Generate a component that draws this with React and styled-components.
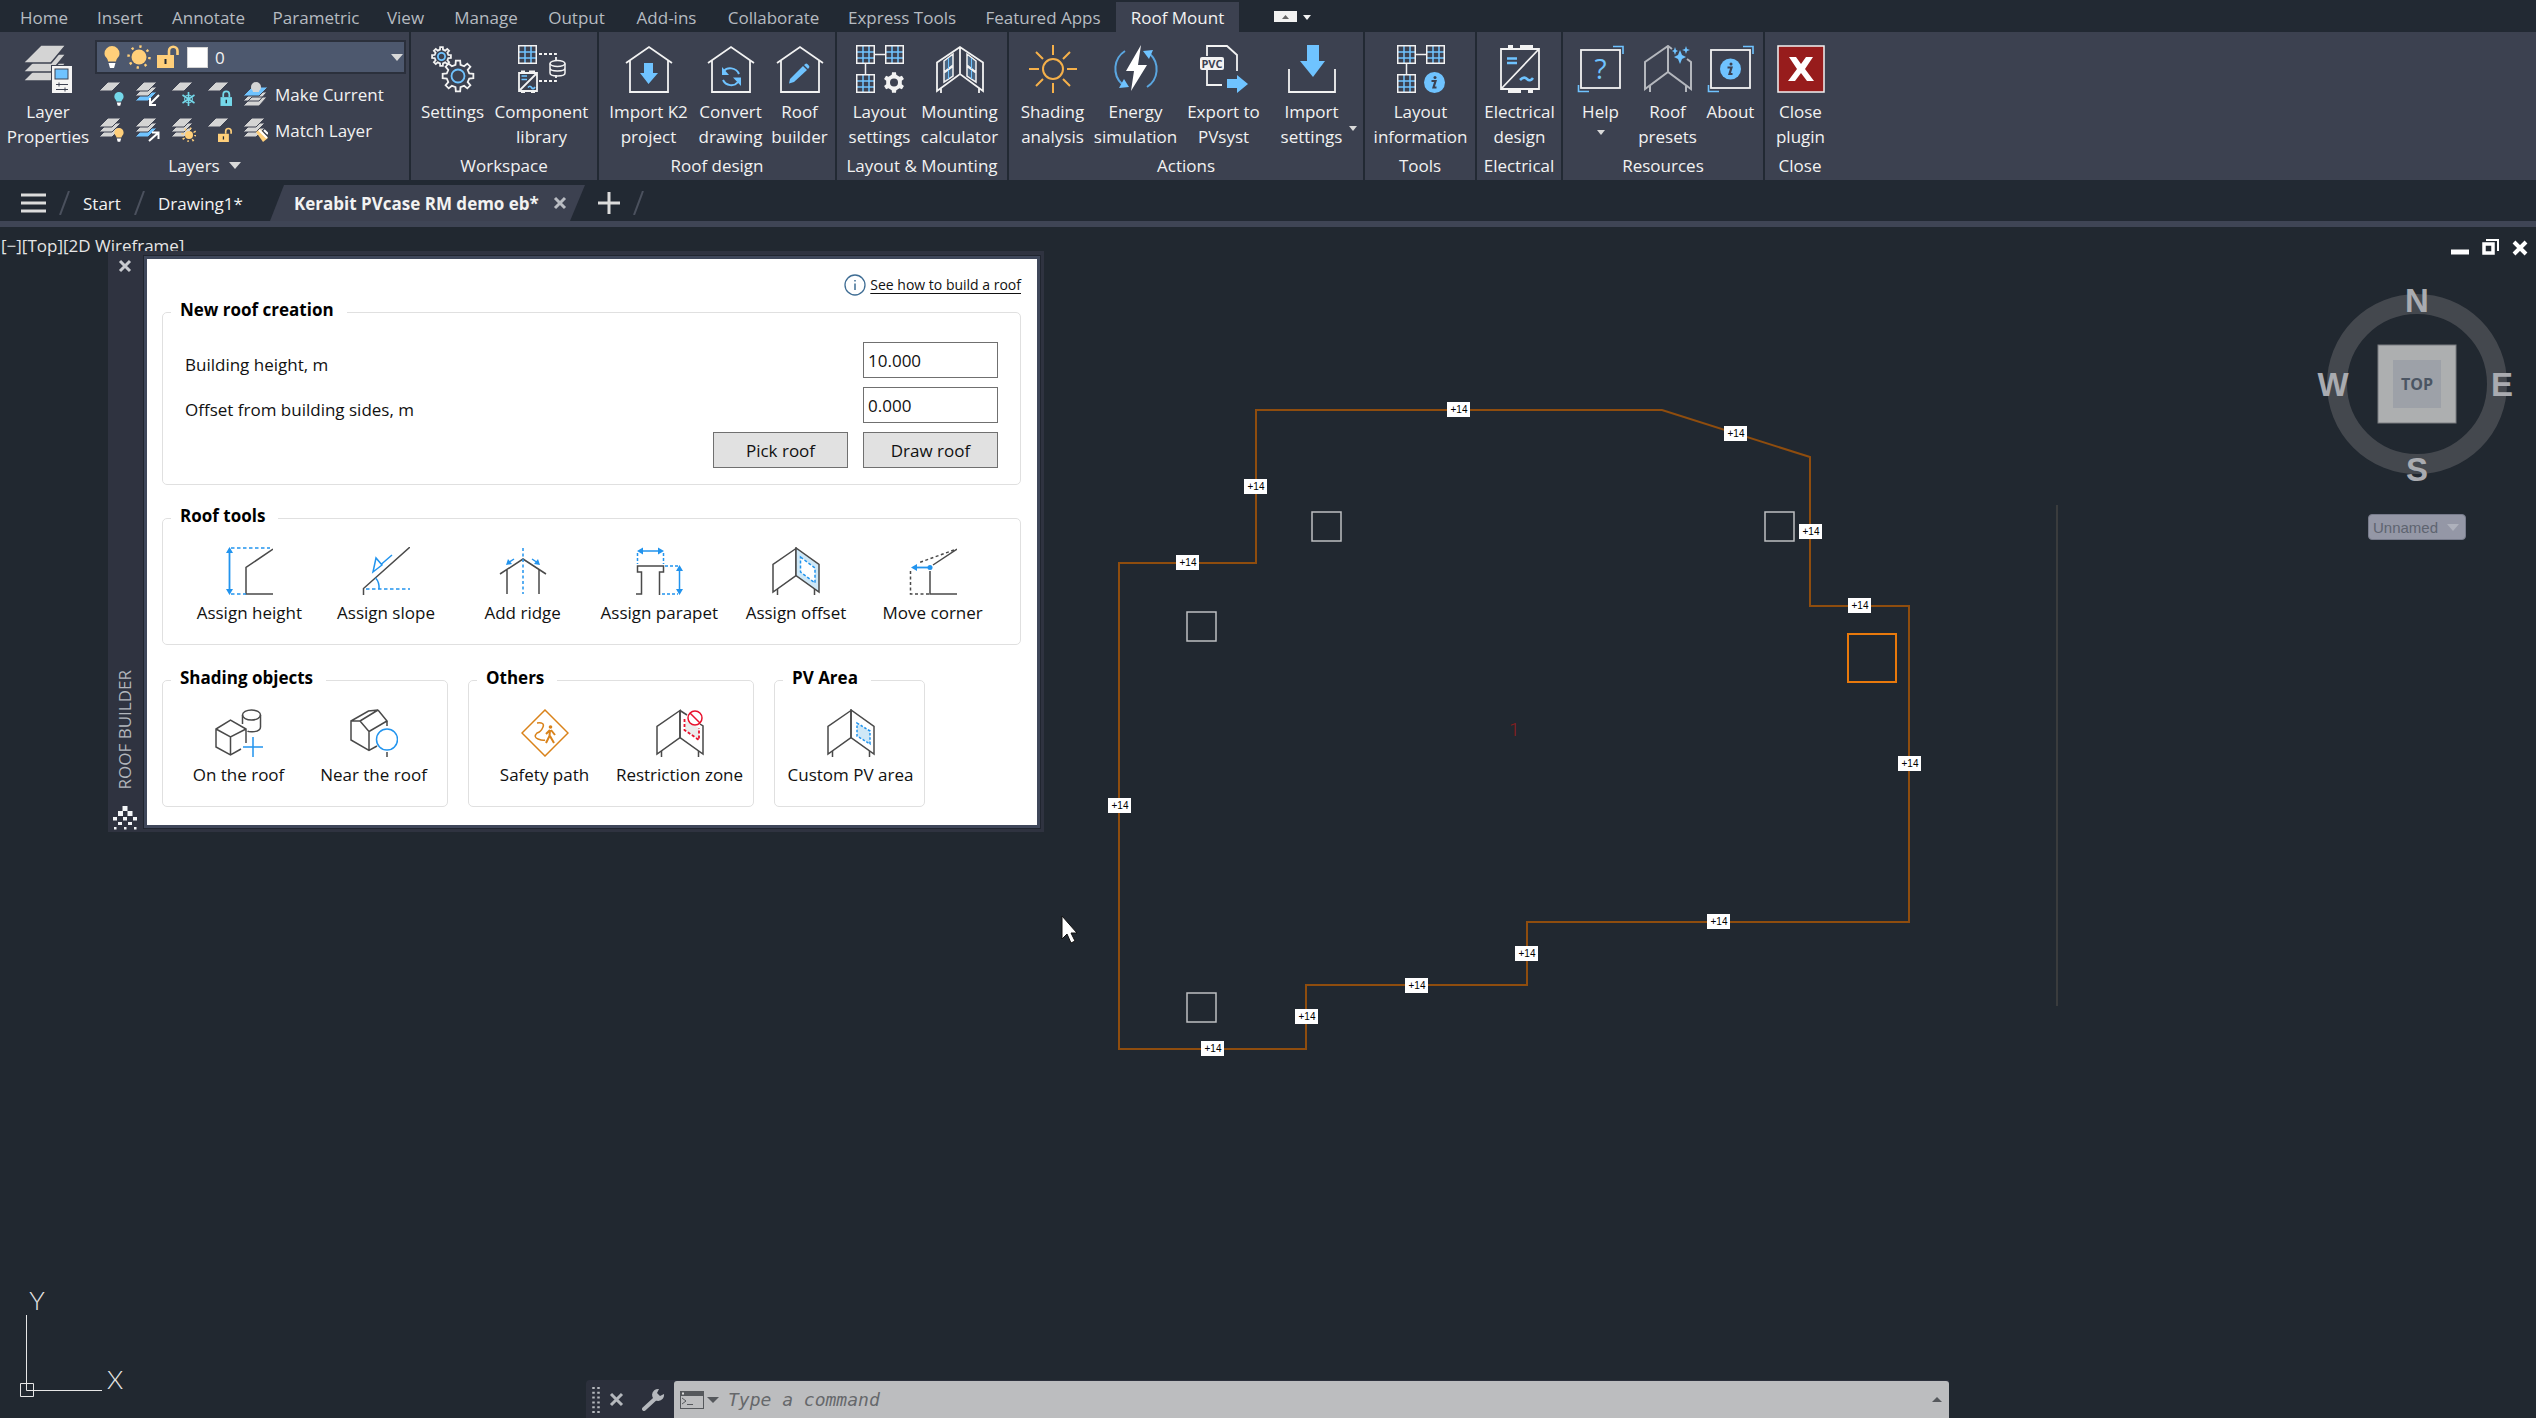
import { useState } from 'react';
import styled, { createGlobalStyle, css } from 'styled-components';

const colors = {
  canvas: '#212830',
  ribbon: '#3c4150',
  dark: '#222933',
  white: '#f2f2f2',
  blue: '#6fc3ff',
  yellow: '#ffcf7a',
  line: '#4a4a4a',
  azure: '#2294ee',
};

const GlobalStyle = createGlobalStyle`
  * {
    box-sizing: border-box;
  }

  body {
    margin: 0;
    background: ${colors.canvas};
    font-family: 'Open Sans', 'Noto Sans', sans-serif;
    font-size: 17px;
    overflow: hidden;
  }

  button, input, select {
    font: inherit;
    color: inherit;
    margin: 0;
  }
`;

const Page = styled.div`
  min-height: 100vh;
  display: flex;
  flex-direction: column;
`;

const plainButton = css`
  border: 0;
  padding: 0;
  background: none;
  cursor: pointer;
`;

/* menu tabs */

const MenuBar = styled.nav`
  height: 32px;
  padding: 2px 0 0 5px;
  display: flex;
  align-items: stretch;
  background: ${colors.dark};
`;

const MenuTab = styled.button`
  ${plainButton}
  width: ${({ $width }) => $width}px;
  white-space: nowrap;
  color: ${({ $active }) => ($active ? colors.white : '#b6bbc1')};
  background: ${({ $active }) => ($active ? colors.ribbon : 'transparent')};
`;

const RibbonToggle = styled.button`
  ${plainButton}
  margin-left: 35px;
  display: flex;
  align-items: center;
`;

/* ribbon */

const Ribbon = styled.div`
  height: 148px;
  display: flex;
  background: ${colors.ribbon};
  color: ${colors.white};
`;

const Panel = styled.section`
  width: ${({ $width }) => $width}px;
  padding: 0 0 2px;
  display: flex;
  flex-direction: column;
  justify-content: space-between;
  align-items: center;
  border-right: 2px solid ${({ $last }) => ($last ? 'transparent' : colors.dark)};
`;

const PanelTools = styled.div`
  padding: 13px 0 0 1px;
  display: flex;
  justify-content: center;
`;

const PanelTitle = styled.div`
  display: flex;
  align-items: center;
  gap: 9px;
  line-height: 25px;
  white-space: nowrap;
`;

const RibbonButton = styled.button`
  ${plainButton}
  position: relative;
  width: ${({ $width }) => $width}px;
  display: flex;
  flex-direction: column;
  align-items: center;
  gap: 6px;
  line-height: 25px;
  white-space: nowrap;
`;

const LabelLine = styled.span`
  display: block;
`;

const SideCaret = styled.span`
  position: absolute;
  right: 1px;
  top: 67px;
`;

const LayersBody = styled.div`
  align-self: stretch;
  display: flex;
  padding: 0 3px 0 0;
`;

const LayerControls = styled.div`
  flex: 1;
  padding-top: 8px;
`;

const LayerCombo = styled.label`
  height: 34px;
  margin-bottom: 2px;
  padding: 0 1px 0 7px;
  display: flex;
  align-items: center;
  gap: 7px;
  background: #4d586e;
  border: 2px solid #2b303c;
`;

const LayerSelect = styled.select`
  flex: 1;
  appearance: none;
  border: 0;
  background: transparent;
`;

const Swatch = styled.span`
  width: 21px;
  height: 21px;
  background: #fff;
  border: 1px solid #d4d4d4;
`;

const LayerRow = styled.div`
  height: 36px;
  padding-left: 5px;
  display: flex;
  align-items: center;
  gap: 12px;
`;

const LayerButton = styled.button`
  ${plainButton}
  display: flex;
  align-items: center;
  gap: 7px;
  white-space: nowrap;
`;

/* document tabs */

const DocBar = styled.div`
  height: 47px;
  padding: 5px 0 0 21px;
  display: flex;
  background: ${colors.dark};
  border-bottom: 6px solid #3f4555;
  color: ${colors.white};
`;

const DocTab = styled.button`
  ${plainButton}
  width: ${({ $width }) => $width}px;
  display: flex;
  align-items: center;
  white-space: nowrap;
`;

const ActiveDoc = styled.div`
  width: 315px;
  margin-left: 30px;
  padding: 0 18px 0 24px;
  display: flex;
  align-items: center;
  justify-content: space-between;
  font-weight: 700;
  white-space: nowrap;
  background: ${colors.ribbon};
  clip-path: polygon(14px 0, 100% 0, calc(100% - 15px) 100%, 0 100%);
`;

const IconButton = styled.button`
  ${plainButton}
  display: flex;
  align-items: center;
`;

const NewDrawing = styled(IconButton)`
  margin-left: 13px;
`;

const Slash = styled.span`
  width: 11px;
  margin: 6px ${({ $gap }) => $gap}px;
  display: flex;
`;

/* drawing area */

const Viewport = styled.main`
  position: relative;
  flex: 1;
  overflow: hidden;
  background: ${colors.canvas};
`;

const Drawing = styled.svg`
  position: absolute;
  inset: 0;
  width: 100%;
  height: 100%;
`;

const ViewLabel = styled.div`
  padding: 6px 0 0 1px;
  line-height: 25px;
  color: #e6e6e6;
`;

const WindowControls = styled.div`
  position: absolute;
  top: 12px;
  right: 8px;
  display: flex;
  gap: 13px;
`;

const ViewCube = styled.div`
  position: absolute;
  top: 47px;
  right: 9px;
  display: flex;
  flex-direction: column;
  align-items: center;
`;

const UcsButton = styled.button`
  width: 98px;
  height: 26px;
  margin-top: 20px;
  padding: 0 6px 0 4px;
  display: flex;
  align-items: center;
  justify-content: space-between;
  border: 1px solid #777b8b;
  border-radius: 4px;
  background: #9497a6;
  color: #5e6470;
  font: 15px 'Liberation Sans', sans-serif;
`;

const UcsIcon = styled.svg`
  position: absolute;
  left: 19px;
  bottom: 20px;
`;

const CommandBar = styled.form`
  position: absolute;
  left: 586px;
  right: 587px;
  bottom: 0;
  height: 38px;
  padding: 1px 0 0 6px;
  display: flex;
  align-items: stretch;
  background: #2c303c;
  border-radius: 4px 0 0 0;
`;

const CommandTools = styled.div`
  padding-left: 9px;
  display: flex;
  gap: 18px;
`;

const CommandField = styled.label`
  flex: 1;
  margin-left: 9px;
  padding: 0 7px 0 6px;
  display: flex;
  align-items: center;
  gap: 3px;
  background: #bcbdbf;
  border-radius: 3px 3px 0 0;
`;

const CommandInput = styled.input`
  flex: 1;
  margin-left: 4px;
  border: 0;
  outline: 0;
  background: transparent;
  font: italic 18px 'DejaVu Sans Mono', monospace;

  &::placeholder {
    color: #66686b;
    opacity: 1;
  }
`;

/* roof builder palette */

const Palette = styled.aside`
  position: absolute;
  top: 24px;
  left: 108px;
  width: 936px;
  padding: 8px 7px 7px 0;
  display: flex;
  background: #2f3340;
`;

const PaletteBar = styled.div`
  width: 33px;
  margin: 0 2px -5px 0;
  display: flex;
  flex-direction: column;
  align-items: center;
`;

const PaletteTitle = styled.h1`
  margin: auto 0 17px;
  writing-mode: vertical-rl;
  transform: rotate(180deg);
  font-size: 17px;
  line-height: 24px;
  font-weight: 400;
  color: #b3b7bd;
`;

const PaletteBody = styled.div`
  flex: 1;
  margin-left: 4px;
  padding: 12px 16px 18px 15px;
  background: #fff;
  color: #111;
  box-shadow: 0 0 0 3px #3f475a, 0 0 0 4px #20252f;
`;

const HelpRow = styled.div`
  height: 27px;
  display: flex;
  align-items: center;
  justify-content: flex-end;
  gap: 4px;
`;

const HelpLink = styled.a`
  font-size: 14px;
  color: #111;
  text-underline-offset: 3px;
`;

const Group = styled.fieldset`
  min-width: 0;
  margin: 0 0 ${({ $gap = 0 }) => $gap}px;
  padding: 15px 6px 19px 8px;
  border: 1px solid #e0e0e0;
  border-radius: 5px;
`;

const GroupTitle = styled.legend`
  height: 28px;
  padding: 0 13px 4px 9px;
  line-height: 24px;
  font-weight: 700;
  color: #000;
`;

const FormGrid = styled.div`
  padding: 1px 16px 0 14px;
  margin-bottom: -3px;
  display: grid;
  grid-template-columns: 1fr 135px 135px;
  grid-auto-rows: 36px;
  gap: 9px 15px;
`;

const FieldLabel = styled.label`
  grid-column: 1 / 3;
  padding-top: 10px;
  line-height: 26px;
`;

const TextInput = styled.input`
  min-width: 0;
  padding: 0 4px;
  border: 1px solid #707070;
  background: #fff;
`;

const FormButton = styled.button`
  grid-column: ${({ $column }) => $column};
  border: 1px solid #707070;
  padding: 0;
  background: #e1e1e1;
`;

const ToolGrid = styled.div`
  padding: ${({ $wide }) => ($wide ? '0 13px 0 10px' : '0')};
  display: grid;
  grid-template-columns: repeat(${({ $count }) => $count}, 1fr);
`;

const ToolButton = styled.button`
  ${plainButton}
  display: flex;
  flex-direction: column;
  align-items: center;
  gap: 6px;
  line-height: 24px;
  white-space: nowrap;
`;

const GroupRow = styled.div`
  display: grid;
  grid-template-columns: 286px 286px 151px;
  gap: 20px;
`;

/* icons */

const Svg = ({ size = 48, width = size, height = size, children, ...rest }) => (
  <svg width={width} height={height} viewBox={`0 0 ${width} ${height}`} fill="none" aria-hidden="true" {...rest}>
    {children}
  </svg>
);

const Caret = ({ width = 8, height = 5, color = '#d9d9d9' }) => (
  <Svg width={width} height={height}>
    <path d={`M0 0H${width}L${width / 2} ${height}Z`} fill={color} />
  </Svg>
);

const Cross = ({ size = 13, color = '#b9bcc2', stroke = 3 }) => (
  <Svg size={size}>
    <path d={`M2 2L${size - 2} ${size - 2}M${size - 2} 2L2 ${size - 2}`} stroke={color} strokeWidth={stroke} />
  </Svg>
);

const SlashMark = ({ gap }) => (
  <Slash $gap={gap}>
    <Svg width={11} height={24}>
      <path d="M10 0L1 24" stroke="#4b515e" strokeWidth="2" />
    </Svg>
  </Slash>
);

const gearPath = (cx, cy, outer, inner, teeth) => {
  const points = [];
  const step = (Math.PI * 2) / teeth;
  for (let i = 0; i < teeth; i += 1) {
    const mid = i * step - Math.PI / 2;
    [
      [-0.28, inner],
      [-0.18, outer],
      [0.18, outer],
      [0.28, inner],
    ].forEach(([k, r]) => {
      const a = mid + k * step;
      points.push(`${(cx + Math.cos(a) * r).toFixed(2)} ${(cy + Math.sin(a) * r).toFixed(2)}`);
    });
  }
  return `M${points.join('L')}Z`;
};

const SolarGrid = ({ x, y }) => (
  <g transform={`translate(${x} ${y})`}>
    <path d="M7 1V18M13 1V18M1 7H18M1 13H18" stroke={colors.blue} strokeWidth="1.5" />
    <rect x="0.75" y="0.75" width="17.5" height="17.5" stroke={colors.white} strokeWidth="1.5" />
  </g>
);

const LayerPropertiesIcon = () => (
  <Svg>
    {[18, 9, 0].map((y) => (
      <path key={y} d={`M17 ${y}H42L27 ${y + 18}H-1Z`} fill="#d4d4d4" stroke={colors.ribbon} strokeWidth="1.5" />
    ))}
    <rect x="27" y="20" width="22" height="29" fill={colors.ribbon} />
    <rect x="28" y="21" width="20" height="27" fill="#f4f4f4" />
    <rect x="31" y="24" width="13" height="10" fill={colors.blue} stroke="#3d4252" />
    <path d="M32 39.5H44M32 44.5H44M35 37.5V41.5M41 42.5V46.5" stroke="#3d4252" />
  </Svg>
);

const SettingsIcon = () => (
  <Svg stroke={colors.white} strokeWidth="1.8">
    <path d={gearPath(12.5, 11.5, 9.5, 7, 8)} />
    <circle cx="12.5" cy="11.5" r="3.6" stroke={colors.blue} />
    <path d={gearPath(29, 31, 15.5, 11.5, 8)} />
    <circle cx="29" cy="31" r="6.5" stroke={colors.blue} />
  </Svg>
);

const ComponentIcon = () => (
  <Svg>
    <SolarGrid x={0} y={0} />
    <path d="M1 28H19V46H1ZM1 46L19 28M3 26.5H7M11 26.5H17M3 47.5H7M13 47.5H17" stroke={colors.white} strokeWidth="1.8" />
    <path d="M3.5 31H9M3.5 34.5H9M10 42.5q2-2.5 3.5 0t3.5-.5" stroke={colors.blue} strokeWidth="1.7" />
    <path d="M21 9H38V16M21 36H38V30" stroke={colors.white} strokeWidth="1.8" strokeDasharray="3 2" />
    <ellipse cx="39.5" cy="18.5" rx="7.5" ry="3" stroke={colors.white} strokeWidth="1.5" />
    <path d="M32 18.5V28c0 4 15 4 15 0V18.5M32 23c0 4 15 4 15 0" stroke={colors.white} strokeWidth="1.5" />
  </Svg>
);

const House = ({ children }) => (
  <Svg>
    <path d="M1 18L24 2L47 18M5 15.5V47H43V15.5" stroke={colors.white} strokeWidth="1.8" />
    {children}
  </Svg>
);

const ImportHouseIcon = () => (
  <House>
    <path d="M19 18H28V28H33L23.5 39L15 28H19Z" fill={colors.blue} />
  </House>
);

const ConvertIcon = () => (
  <House>
    <path d="M17 26c3-4 12-4 15 3M31 37c-4 5-12 4-15-2" stroke={colors.blue} strokeWidth="2" />
    <path d="M15 22V30H22ZM34 41V32.5H26Z" fill={colors.blue} />
  </House>
);

const PencilHouseIcon = () => (
  <House>
    <path d="M14 34L27 21L31 25L18 37L13 38.5Z" fill={colors.blue} />
    <path d="M28 20L30 18.5q2 0 3.5 3.5L32 24Z" fill={colors.blue} />
  </House>
);

const LayoutGrid = ({ children }) => (
  <Svg>
    <SolarGrid x={0} y={0} />
    <SolarGrid x={29} y={0} />
    <SolarGrid x={0} y={29} />
    <path d="M19 9.5H29M9.5 19V29" stroke={colors.white} strokeWidth="1.5" />
    {children}
  </Svg>
);

const LayoutSettingsIcon = () => (
  <LayoutGrid>
    <path d={gearPath(38, 37.5, 10.5, 8, 6)} fill={colors.white} />
    <circle cx="38" cy="37.5" r="4" fill={colors.ribbon} />
  </LayoutGrid>
);

const InfoDot = ({ cx, cy, r }) => (
  <>
    <circle cx={cx} cy={cy} r={r} fill={colors.blue} />
    <path d={`M${cx - 3} ${cy - 1.5}H${cx + 1}L${cx - 1} ${cy + 5}H${cx + 2}`} stroke={colors.ribbon} strokeWidth="2.2" />
    <circle cx={cx + 0.5} cy={cy - 5} r="1.5" fill={colors.ribbon} />
  </>
);

const LayoutInfoIcon = () => (
  <LayoutGrid>
    <InfoDot cx={37.5} cy={37.5} r={10.5} />
  </LayoutGrid>
);

const MountingIcon = () => (
  <Svg stroke={colors.white} strokeWidth="1.8">
    <path d="M24 2L1 17.5V46L24 29L47 46V17.5ZM24 2V29M5 43V48M43 43V48" />
    <path
      d="M8 16L17 9V20L8 27ZM8 28L17 21.5V31L8 37ZM31 9L40 16V27L31 20ZM31 21.5L40 28V37L31 31Z"
      fill="#4b6580"
      strokeWidth="1.5"
    />
    <path d="M12.5 13V24M12.5 25V34M35.5 13V24M35.5 25V34" stroke={colors.blue} strokeWidth="1" />
  </Svg>
);

const SunIcon = () => (
  <Svg stroke="#f5b04a" strokeWidth="2">
    <circle cx="24" cy="24" r="10" />
    <path d="M24 0V10M24 38V48M0 24H10M38 24H48M7 7L14 14M34 34L41 41M41 7L34 14M14 34L7 41" />
  </Svg>
);

const EnergyIcon = () => (
  <Svg>
    <path d="M13 6A21 21 0 0 0 10 39M35 42A21 21 0 0 0 38 9" stroke="#5aa6e0" strokeWidth="2" />
    <path d="M17 42L7 43L12 34ZM31 6L41 5L37 14Z" fill={colors.blue} />
    <path d="M29 0L14 26H22L19 46L35 20H26Z" fill="#fff" />
  </Svg>
);

const ExportIcon = () => (
  <Svg>
    <path d="M7 11V1H27L37 10V26M7 25V40H22" stroke={colors.white} strokeWidth="1.8" />
    <rect x="0" y="12" width="24" height="13" rx="2" fill={colors.white} />
    <text x="12" y="22.5" textAnchor="middle" fontSize="11" fontWeight="700" fill={colors.ribbon}>
      PVC
    </text>
    <path d="M27 34H37V30L48 39L37 48V43H27Z" fill={colors.blue} />
  </Svg>
);

const ImportSettingsIcon = () => (
  <Svg>
    <path d="M1 24V47H47V24" stroke={colors.white} strokeWidth="1.8" />
    <path d="M19 0H31V16H37L25 32L12 16H19Z" fill={colors.blue} />
  </Svg>
);

const ElectricalIcon = () => (
  <Svg stroke={colors.white}>
    <path d="M5 4H43V44H5ZM5 44L43 4" strokeWidth="1.8" />
    <path d="M12 1.5H17M24 1.5H37M12 46.5H25M32 46.5H37" strokeWidth="3" />
    <path d="M11 13.5H21M11 18H21" stroke={colors.blue} strokeWidth="2.6" />
    <path d="M24 35q4-4 7-1t6-1" stroke={colors.blue} strokeWidth="2.6" />
  </Svg>
);

const Frame = ({ children }) => (
  <Svg>
    <rect x="4" y="5" width="39" height="38" stroke={colors.white} strokeWidth="1.8" />
    <path d="M36 1.5H46V9M1.5 40V46.5H12" stroke={colors.blue} strokeWidth="1.6" />
    {children}
  </Svg>
);

const HelpIcon = () => (
  <Frame>
    <text x="23.5" y="34" textAnchor="middle" fontSize="28" fill={colors.blue}>
      ?
    </text>
  </Frame>
);

const AboutIcon = () => (
  <Frame>
    <InfoDot cx={23.5} cy={24} r={10.5} />
  </Frame>
);

const PresetsIcon = () => (
  <Svg stroke="#b4b7bd" strokeWidth="2">
    <path d="M28 4L24 1L1 17V44L24 27L47 44V17L43 14M24 1V27M6 41V47M42 41V47" />
    <path
      d="M36 5l2 5 4 2-4 2-2 5-2-5-4-2 4-2ZM42 1l1 3 3 1-3 1-1 3-1-3-3-1 3-1ZM31 2l1 3 2 1-2 1-1 3-1-3-2-1 2-1Z"
      fill={colors.blue}
      stroke="none"
    />
  </Svg>
);

const CloseIcon = () => (
  <Svg>
    <rect x="1" y="1" width="46" height="46" fill="#971c1c" stroke={colors.white} strokeWidth="1.5" />
    <path d="M12 12H19L24 19L29 12H36L28 24L37 36H30L24 28L18 36H11L20 24Z" fill="#fff" />
  </Svg>
);

const BulbIcon = ({ x = 0, y = 0, scale = 1, color = colors.yellow }) => (
  <g transform={`translate(${x} ${y}) scale(${scale})`}>
    <path d="M8 0a7.5 7.5 0 0 1 7.5 7.5c0 4-3 4-3.5 8H4c0-4-3.5-4-3.5-8A7.5 7.5 0 0 1 8 0Z" fill={color} />
    <path d="M4.5 17H11.5L10 22H6Z" fill="#fff" />
  </g>
);

const SmallSun = ({ cx, cy, r, ray }) => (
  <>
    <circle cx={cx} cy={cy} r={r} fill={colors.yellow} />
    <circle
      cx={cx}
      cy={cy}
      r={ray}
      stroke={colors.yellow}
      strokeWidth="2.5"
      strokeDasharray={`${ray * 0.22} ${ray * 0.5654}`}
    />
  </>
);

const LockIcon = ({ x = 0, y = 0, scale = 1, color = colors.yellow, open }) => (
  <g transform={`translate(${x} ${y}) scale(${scale})`}>
    <rect x="0" y="9" width="17" height="13" fill={color} />
    <path d={open ? 'M12 9V5a4 4 0 0 1 8.5 0V9' : 'M4 9V5a4.5 4.5 0 0 1 9 0V9'} stroke={color} strokeWidth="2.6" />
    <path d="M8.5 13V18" stroke={colors.dark} strokeWidth="2" />
  </g>
);

const SmallLayer = ({ stack, accent, children }) => (
  <Svg size={24}>
    {(stack ? [10, 5, 0] : [0]).map((y) => (
      <path
        key={y}
        d={`M8 ${y}H21L12 ${y + 9}H-1Z`}
        fill={accent === y ? colors.blue : '#d4d4d4'}
        stroke={colors.ribbon}
      />
    ))}
    {children}
  </Svg>
);

const rowOneIcons = [
  { name: 'Layer off', icon: <SmallLayer><BulbIcon x={14} y={10} scale={0.62} color="#74d8ea" /></SmallLayer> },
  { name: 'Isolate', icon: <SmallLayer stack accent={10}><path d="M23 13L14 22M14 16V23H20" stroke="#fff" strokeWidth="2" /></SmallLayer> },
  {
    name: 'Freeze',
    icon: (
      <SmallLayer>
        <path d="M16.5 10V24M10.5 13L22.5 21M22.5 13L10.5 21" stroke="#74d8ea" strokeWidth="1.6" />
        <circle cx="16.5" cy="17" r="4" stroke="#74d8ea" />
      </SmallLayer>
    ),
  },
  { name: 'Lock', icon: <SmallLayer><LockIcon x={12.5} y={9} scale={0.68} color="#74d8ea" /></SmallLayer> },
];

const rowTwoIcons = [
  { name: 'Turn all layers on', icon: <SmallLayer stack><BulbIcon x={14} y={10} scale={0.62} /></SmallLayer> },
  { name: 'Unisolate', icon: <SmallLayer stack accent={10}><path d="M13 23L22 15M16 14.5H22.5V21" stroke="#fff" strokeWidth="2" /></SmallLayer> },
  { name: 'Thaw all layers', icon: <SmallLayer stack><SmallSun cx={17} cy={17} r={4} ray={6.5} /></SmallLayer> },
  { name: 'Unlock', icon: <SmallLayer><LockIcon x={10} y={10} scale={0.64} open /></SmallLayer> },
];

const MakeCurrentIcon = () => (
  <Svg size={24}>
    <path d="M8 15H23L15 24H-1ZM8 10H23L15 19H-1Z" fill="#d4d4d4" stroke={colors.ribbon} />
    <path d="M8 5H24L15 14H-1Z" fill={colors.blue} stroke={colors.ribbon} />
    <path d="M7 5a5 5 0 0 1 10 0c0 3-2 3-2 5H9c0-2-2-2-2-5Z" fill="#d4d4d4" />
  </Svg>
);

const MatchLayerIcon = () => (
  <SmallLayer stack>
    <path d="M12 14L16 11L24 20L19 24Z" fill={colors.yellow} />
    <path d="M15 12L23 20M20 12L24 16" stroke="#fff" strokeWidth="2" />
  </SmallLayer>
);

const AssignHeightIcon = () => (
  <Svg stroke={colors.line} strokeWidth="1.5">
    <path d="M48 2L21 20.5V47H48" />
    <path d="M4.5 3V45" stroke={colors.azure} strokeWidth="1.8" />
    <path d="M6 1H45M6 47H21" stroke={colors.azure} strokeDasharray="3.5 2.5" />
    <path d="M4.5 0L8 6H1ZM4.5 48L8 42H1Z" fill={colors.azure} stroke="none" />
  </Svg>
);

const AssignSlopeIcon = () => (
  <Svg stroke={colors.line} strokeWidth="1.5">
    <path d="M48 0L1.5 41.5V48" />
    <path d="M4 42H48" stroke={colors.azure} strokeDasharray="3.5 2.5" />
    <path d="M13.5 31q4 4 3.5 11M30 8L19 17.5M14 11L11 25L20 18Z" stroke={colors.azure} />
  </Svg>
);

const AddRidgeIcon = () => (
  <Svg stroke={colors.line} strokeWidth="1.5">
    <path d="M1 27L24 12L47 27M8 23V47M40 23V47" />
    <path d="M24 1V47" stroke={colors.azure} strokeDasharray="3 2.5" />
    <path d="M15 12L9 16M33 12L39 16" stroke={colors.azure} />
    <path d="M7 18L9 12L13 17ZM41 18L39 12L35 17Z" fill={colors.azure} stroke="none" />
  </Svg>
);

const AssignParapetIcon = () => (
  <Svg stroke={colors.line} strokeWidth="1.5">
    <path d="M24.5 48V25H28.5V19H2.5V25H6.5V47H1" />
    <path d="M5 4H26M44.5 22V44" stroke={colors.azure} />
    <path d="M2.5 6V17M28.5 6V17M30 19H43M27 47H43" stroke={colors.azure} strokeDasharray="3 2" />
    <path d="M2 4L8 0.5V7.5ZM29 4L23 0.5V7.5ZM44.5 18L48 24H41ZM44.5 48L48 42H41Z" fill={colors.azure} stroke="none" />
  </Svg>
);

const Book = ({ fill = 'none', right = 'M24 1V28.5L47 45V17.5Z', children }) => (
  <Svg stroke={colors.line} strokeWidth="1.5">
    <path d="M24 1.5L1 17.5V45L24 28.5Z" />
    <path d={right} fill={fill} />
    <path d="M5.5 42V48M42.5 42V48" />
    {children}
  </Svg>
);

const AssignOffsetIcon = () => (
  <Book fill="#cfe8f7">
    <path d="M28.5 10L43 21V36L28.5 25Z" fill="#fff" stroke={colors.azure} strokeDasharray="3 2" />
  </Book>
);

const MoveCornerIcon = () => (
  <Svg stroke={colors.line} strokeWidth="1.5">
    <path d="M48 2L24 18M21 24V47H48" />
    <path d="M45 3L9 16M1.5 24V47H20" strokeDasharray="3 2.5" />
    <path d="M6 20.5H20" stroke={colors.azure} strokeWidth="1.8" />
    <path d="M2 20.5L8 17V24Z" fill={colors.azure} stroke="none" />
    <circle cx="21" cy="20.5" r="2.5" fill={colors.azure} stroke="none" />
  </Svg>
);

const OnRoofIcon = () => (
  <Svg stroke={colors.line} strokeWidth="1.5">
    <path d="M26 40L15.5 46L1 38V20L15.5 11L31 20V34M1 20L15.5 28L31 20M15.5 28V46" />
    <ellipse cx="36.5" cy="6" rx="9" ry="5" />
    <path d="M27.5 6V15M45.5 6V18c0 6-12 5-13 4" />
    <path d="M38 28V48M28 38H48" stroke={colors.azure} />
  </Svg>
);

const NearRoofIcon = () => (
  <Svg stroke={colors.line} strokeWidth="1.5">
    <path d="M27 37L19 41.5L1 31V12L10 12L19 22.5V41.5M1 12L18.5 2L28 1L10 12M28 1L37 12L19 22.5M37 12V17M37 43V48" />
    <circle cx="37" cy="30.5" r="10.5" stroke={colors.azure} />
  </Svg>
);

const SafetyPathIcon = () => (
  <Svg stroke="#d9821a" strokeWidth="1.5">
    <path d="M24 1L47 24L24 47L1 24Z" />
    <path d="M16 14q8-1 6 4t-6 6q-4 4 1 6t7 1" />
    <circle cx="29.5" cy="18" r="1.8" fill="#d9821a" stroke="none" />
    <path d="M29 21L28.5 27L25 34M29 27L33 34M29 21L25 25M30 21L34 26" strokeWidth="2" />
  </Svg>
);

const RestrictionIcon = () => (
  <Book right="M24 1.5L31 6M24 1.5V28.5L47 45V17L44 15">
    <path d="M29 11L43 19V31L29 22Z" fill="#ececec" stroke="none" />
    <path d="M28.5 10V21L43 31V19" stroke="#e8112d" strokeWidth="1.8" strokeDasharray="3 2" />
    <circle cx="39" cy="9" r="7" stroke="#e8112d" fill="#fff" />
    <path d="M34 4L44 14" stroke="#e8112d" />
  </Book>
);

const PvAreaIcon = () => (
  <Book>
    <path d="M30 14L43 22V35L30 27Z" fill="#cfe8f7" stroke={colors.azure} strokeDasharray="2.5 1.8" />
  </Book>
);

const BrandIcon = () => (
  <Svg size={24}>
    <path
      d="M9.5 0h5v5h-5ZM5 5h5v5H5ZM14.5 5h5v5h-5ZM0 11h4v3.5H0ZM10 11h4v3.5h-4ZM20 11h4v3.5h-4ZM5 16h4v3H5ZM15 16h4v3h-4ZM1 21h2.5v2.5H1ZM11 21h2.5v2.5H11ZM21 21h2.5v2.5H21Z"
      fill="#f4f6f8"
    />
  </Svg>
);

/* data */

const menuTabs = [
  ['Home', 78],
  ['Insert', 74],
  ['Annotate', 103],
  ['Parametric', 112],
  ['View', 67],
  ['Manage', 94],
  ['Output', 87],
  ['Add-ins', 93],
  ['Collaborate', 121],
  ['Express Tools', 136],
  ['Featured Apps', 146],
  ['Roof Mount', 123],
];

const ribbonPanels = [
  {
    title: 'Workspace',
    width: 188,
    tools: [
      { label: ['Settings'], width: 74, icon: <SettingsIcon /> },
      { label: ['Component', 'library'], width: 104, icon: <ComponentIcon /> },
    ],
  },
  {
    title: 'Roof design',
    width: 238,
    tools: [
      { label: ['Import K2', 'project'], width: 86, icon: <ImportHouseIcon /> },
      { label: ['Convert', 'drawing'], width: 78, icon: <ConvertIcon /> },
      { label: ['Roof', 'builder'], width: 60, icon: <PencilHouseIcon /> },
    ],
  },
  {
    title: 'Layout & Mounting',
    width: 172,
    tools: [
      { label: ['Layout', 'settings'], width: 74, icon: <LayoutSettingsIcon /> },
      { label: ['Mounting', 'calculator'], width: 86, icon: <MountingIcon /> },
    ],
  },
  {
    title: 'Actions',
    width: 356,
    tools: [
      { label: ['Shading', 'analysis'], width: 74, icon: <SunIcon /> },
      { label: ['Energy', 'simulation'], width: 92, icon: <EnergyIcon /> },
      { label: ['Export to', 'PVsyst'], width: 84, icon: <ExportIcon /> },
      { label: ['Import', 'settings'], width: 92, icon: <ImportSettingsIcon />, sideCaret: true },
    ],
  },
  {
    title: 'Tools',
    width: 112,
    tools: [{ label: ['Layout', 'information'], width: 106, icon: <LayoutInfoIcon /> }],
  },
  {
    title: 'Electrical',
    width: 86,
    tools: [{ label: ['Electrical', 'design'], width: 80, icon: <ElectricalIcon /> }],
  },
  {
    title: 'Resources',
    width: 202,
    tools: [
      { label: ['Help'], width: 68, icon: <HelpIcon />, caret: true },
      { label: ['Roof', 'presets'], width: 66, icon: <PresetsIcon /> },
      { label: ['About'], width: 60, icon: <AboutIcon /> },
    ],
  },
  {
    title: 'Close',
    width: 72,
    tools: [{ label: ['Close', 'plugin'], width: 66, icon: <CloseIcon /> }],
  },
];

const roofTools = [
  { label: 'Assign height', icon: <AssignHeightIcon /> },
  { label: 'Assign slope', icon: <AssignSlopeIcon /> },
  { label: 'Add ridge', icon: <AddRidgeIcon /> },
  { label: 'Assign parapet', icon: <AssignParapetIcon /> },
  { label: 'Assign offset', icon: <AssignOffsetIcon /> },
  { label: 'Move corner', icon: <MoveCornerIcon /> },
];

const smallGroups = [
  {
    title: 'Shading objects',
    tools: [
      { label: 'On the roof', icon: <OnRoofIcon /> },
      { label: 'Near the roof', icon: <NearRoofIcon /> },
    ],
  },
  {
    title: 'Others',
    tools: [
      { label: 'Safety path', icon: <SafetyPathIcon /> },
      { label: 'Restriction zone', icon: <RestrictionIcon /> },
    ],
  },
  { title: 'PV Area', tools: [{ label: 'Custom PV area', icon: <PvAreaIcon /> }] },
];

const heightTags = [
  [1459, 410], [1736, 434], [1256, 487], [1188, 563], [1811, 532], [1860, 606], [1910, 764],
  [1719, 922], [1527, 954], [1417, 986], [1307, 1017], [1213, 1049], [1120, 806],
];

const shadingBoxes = [[1312, 512], [1765, 512], [1187, 612], [1187, 993]];

/* parts */

const MenuTabs = () => {
  const [active, setActive] = useState('Roof Mount');

  return (
    <MenuBar>
      {menuTabs.map(([name, width]) => (
        <MenuTab key={name} $width={width} $active={name === active} onClick={() => setActive(name)}>
          {name}
        </MenuTab>
      ))}
      <RibbonToggle aria-label="Minimize ribbon">
        <Svg width={38} height={12}>
          <rect width="23" height="11" fill="#f2f2f2" />
          <path d="M8 8H15L11.5 4Z" fill="#666" />
          <path d="M29 4H37L33 9Z" fill="#f2f2f2" />
        </Svg>
      </RibbonToggle>
    </MenuBar>
  );
};

const LayersPanel = () => (
  <Panel $width={411}>
    <LayersBody>
      <PanelTools>
        <RibbonButton $width={94}>
          <LayerPropertiesIcon />
          <span>
            <LabelLine>Layer</LabelLine>
            <LabelLine>Properties</LabelLine>
          </span>
        </RibbonButton>
      </PanelTools>
      <LayerControls>
        <LayerCombo>
          <Svg width={76} height={24}>
            <BulbIcon x={0} y={1} />
            <SmallSun cx={35} cy={12} r={7.5} ray={10.5} />
            <LockIcon x={53} y={1} open />
          </Svg>
          <Swatch />
          <LayerSelect aria-label="Current layer" defaultValue="0">
            <option value="0">0</option>
          </LayerSelect>
          <Caret width={12} height={7} />
        </LayerCombo>
        <LayerRow>
          {rowOneIcons.map(({ name, icon }) => (
            <IconButton key={name} aria-label={name}>{icon}</IconButton>
          ))}
          <LayerButton><MakeCurrentIcon />Make Current</LayerButton>
        </LayerRow>
        <LayerRow>
          {rowTwoIcons.map(({ name, icon }) => (
            <IconButton key={name} aria-label={name}>{icon}</IconButton>
          ))}
          <LayerButton><MatchLayerIcon />Match Layer</LayerButton>
        </LayerRow>
      </LayerControls>
    </LayersBody>
    <PanelTitle>
      Layers
      <Caret width={12} height={7} />
    </PanelTitle>
  </Panel>
);

const RibbonPanel = ({ title, width, tools, last }) => (
  <Panel $width={width} $last={last}>
    <PanelTools>
      {tools.map((tool) => (
        <RibbonButton key={tool.label.join(' ')} $width={tool.width}>
          {tool.icon}
          <span>
            {tool.label.map((line) => (
              <LabelLine key={line}>{line}</LabelLine>
            ))}
          </span>
          {tool.caret && <Caret />}
          {tool.sideCaret && <SideCaret><Caret /></SideCaret>}
        </RibbonButton>
      ))}
    </PanelTools>
    <PanelTitle>{title}</PanelTitle>
  </Panel>
);

const DocumentTabs = () => (
  <DocBar>
    <IconButton aria-label="Menu">
      <Svg width={25} height={20}>
        <path d="M0 2H25M0 10H25M0 18H25" stroke="#dcdcdc" strokeWidth="3" />
      </Svg>
    </IconButton>
    <SlashMark gap={13} />
    <DocTab $width={38}>Start</DocTab>
    <SlashMark gap={13} />
    <DocTab $width={82}>Drawing1*</DocTab>
    <ActiveDoc>
      Kerabit PVcase RM demo eb*
      <IconButton aria-label="Close drawing"><Cross size={14} /></IconButton>
    </ActiveDoc>
    <NewDrawing aria-label="New drawing">
      <Svg width={22} height={22}>
        <path d="M11 0V22M0 11H22" stroke="#dcdcdc" strokeWidth="3" />
      </Svg>
    </NewDrawing>
    <SlashMark gap={13} />
  </DocBar>
);

const ToolList = ({ tools, wide }) => (
  <ToolGrid $count={tools.length} $wide={wide}>
    {tools.map(({ label, icon }) => (
      <ToolButton key={label}>
        {icon}
        {label}
      </ToolButton>
    ))}
  </ToolGrid>
);

const RoofBuilder = () => {
  const [height, setHeight] = useState('10.000');
  const [offset, setOffset] = useState('0.000');

  return (
    <Palette>
      <PaletteBar>
        <IconButton aria-label="Close palette"><Cross size={14} color="#c9cbd0" /></IconButton>
        <PaletteTitle>ROOF BUILDER</PaletteTitle>
        <BrandIcon />
      </PaletteBar>
      <PaletteBody>
        <HelpRow>
          <Svg size={22}>
            <circle cx="11" cy="11" r="10" stroke="#3f6d94" strokeWidth="1.3" />
            <path d="M11 9.5V16M11 6V7.5" stroke="#3f6d94" strokeWidth="1.5" />
          </Svg>
          <HelpLink href="#build">See how to build a roof</HelpLink>
        </HelpRow>
        <Group $gap={19}>
          <GroupTitle>New roof creation</GroupTitle>
          <FormGrid>
            <FieldLabel htmlFor="height">Building height, m</FieldLabel>
            <TextInput id="height" value={height} onChange={(e) => setHeight(e.target.value)} />
            <FieldLabel htmlFor="offset">Offset from building sides, m</FieldLabel>
            <TextInput id="offset" value={offset} onChange={(e) => setOffset(e.target.value)} />
            <FormButton $column={2}>Pick roof</FormButton>
            <FormButton $column={3}>Draw roof</FormButton>
          </FormGrid>
        </Group>
        <Group $gap={21}>
          <GroupTitle>Roof tools</GroupTitle>
          <ToolList tools={roofTools} wide />
        </Group>
        <GroupRow>
          {smallGroups.map(({ title, tools }) => (
            <Group key={title}>
              <GroupTitle>{title}</GroupTitle>
              <ToolList tools={tools} />
            </Group>
          ))}
        </GroupRow>
      </PaletteBody>
    </Palette>
  );
};

const RoofDrawing = () => (
  <Drawing>
    <g transform="translate(0 -227)" fill="none">
      <path
        d="M1119 563H1256V410H1662L1810 457V606H1909V922H1527V985H1306V1049H1119Z"
        stroke="#8f4d0e"
        strokeWidth="2"
      />
      {shadingBoxes.map(([x, y]) => (
        <rect key={`${x}-${y}`} x={x} y={y} width="29" height="29" stroke="#bdbfc1" strokeWidth="1.5" />
      ))}
      <rect x="1848" y="634" width="48" height="48" stroke="#e8790c" strokeWidth="2" />
      <text x="1509" y="736" fontFamily="Roboto" fontSize="19" fontWeight="300" fill="#8f1d1d">1</text>
      <path d="M2057 505V1006" stroke="#55504a" />
      {heightTags.map(([x, y]) => (
        <g key={`${x}-${y}`}>
          <rect x={x - 12} y={y - 8} width="23" height="15" fill="#fff" />
          <text x={x} y={y + 3} textAnchor="middle" fontFamily="Liberation Sans" fontSize="10" fill="#000">+14</text>
        </g>
      ))}
      <path d="M1062 916V939L1067 934L1071 943L1075 941L1071 933H1077Z" fill="#fff" stroke="#111" />
    </g>
  </Drawing>
);

const Compass = () => (
  <ViewCube>
    <Svg width={220} height={220} fontFamily="Liberation Sans" fontWeight="700" fontSize="33" textAnchor="middle">
      <circle cx="110" cy="110" r="80" stroke="#44484e" strokeWidth="20" />
      <g fill="#a9abb0">
        <text x="110" y="38">N</text>
        <text x="26" y="122">W</text>
        <text x="195" y="122">E</text>
        <text x="110" y="207">S</text>
      </g>
      <rect x="71" y="71" width="78" height="78" fill="#adafb0" stroke="#7b7d80" />
      <rect x="86" y="86" width="48" height="48" fill="#9da1a8" />
      <text x="110" y="116" fontFamily="Open Sans" fontSize="16" fill="#4b5563">TOP</text>
    </Svg>
    <UcsButton>
      Unnamed
      <Caret width={12} height={7} color="#aeb1bc" />
    </UcsButton>
  </ViewCube>
);

const AxisIcon = () => (
  <UcsIcon width="116" height="116">
    <path d="M7.5 33V108.5H83M1.5 101.5H14.5V114.5H1.5Z" fill="none" stroke="#e6e6e6" />
    <g fontFamily="Lato" fontWeight="300" fontSize="26" textAnchor="middle" fill="#e6e6e6">
      <text x="18" y="28">Y</text>
      <text x="96" y="107">X</text>
    </g>
  </UcsIcon>
);

const CommandLine = () => (
  <CommandBar onSubmit={(e) => e.preventDefault()}>
    <Svg width={8} height={36}>
      <path d="M1.5 6V32M6.5 6V32" stroke="#b5b8bd" strokeWidth="2.5" strokeDasharray="2 2.8" />
    </Svg>
    <CommandTools>
      <IconButton type="button" aria-label="Close command line"><Cross size={15} color="#b5b8bd" /></IconButton>
      <IconButton type="button" aria-label="Customize">
        <Svg size={23}>
          <path d="M2 21L14 10" stroke="#b5b8bd" strokeWidth="4" strokeLinecap="round" />
          <path d="M17 1a6 6 0 1 0 5 5l-4 2-3-3Z" fill="#b5b8bd" />
        </Svg>
      </IconButton>
    </CommandTools>
    <CommandField>
      <Svg width={24} height={18}>
        <rect x="0.5" y="0.5" width="23" height="17" stroke="#55585c" />
        <path d="M0 0H24V5H0Z" fill="#55585c" />
        <path d="M2 2.5H4" stroke="#ddd" strokeWidth="2" />
        <path d="M2 7L6 10L2 13M7 13.5H13" stroke="#55585c" />
      </Svg>
      <Caret width={12} height={6} color="#55585c" />
      <CommandInput aria-label="Command" placeholder="Type a command" />
      <Svg width={10} height={5}>
        <path d="M0 5H10L5 0Z" fill="#55585c" />
      </Svg>
    </CommandField>
  </CommandBar>
);

const App = () => (
  <Page>
    <GlobalStyle />
    <MenuTabs />
    <Ribbon>
      <LayersPanel />
      {ribbonPanels.map((panel, i) => (
        <RibbonPanel key={panel.title} {...panel} last={i === ribbonPanels.length - 1} />
      ))}
    </Ribbon>
    <DocumentTabs />
    <Viewport>
      <ViewLabel>[−][Top][2D Wireframe]</ViewLabel>
      <RoofDrawing />
      <WindowControls>
        <IconButton aria-label="Minimize">
          <Svg width={18} height={16}><path d="M0 12H18" stroke="#fff" strokeWidth="5" /></Svg>
        </IconButton>
        <IconButton aria-label="Restore">
          <Svg width={17} height={17}>
            <path d="M4 1H16V12" stroke="#fff" strokeWidth="2" />
            <rect x="2" y="5" width="9" height="9" stroke="#fff" strokeWidth="3.5" />
          </Svg>
        </IconButton>
        <IconButton aria-label="Close"><Cross size={16} color="#fff" stroke={4} /></IconButton>
      </WindowControls>
      <Compass />
      <AxisIcon />
      <RoofBuilder />
      <CommandLine />
    </Viewport>
  </Page>
);

export default App;
